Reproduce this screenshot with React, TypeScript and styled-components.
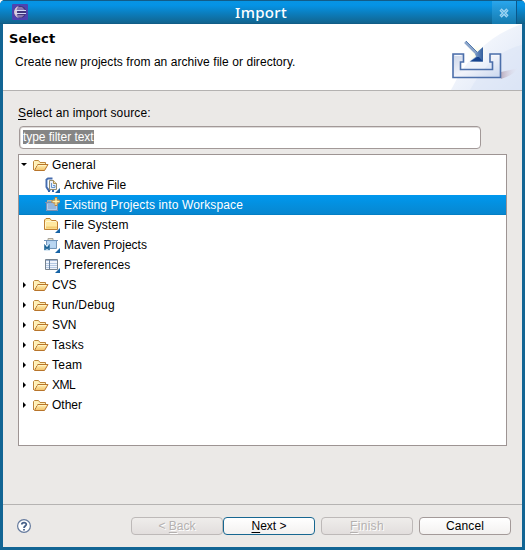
import React from "react";
import styled, { createGlobalStyle } from "styled-components";

const GlobalStyle = createGlobalStyle`
  * { box-sizing: border-box; }
  html, body { margin: 0; background: #fff; }
  body { font-family: "Liberation Sans", Arial, sans-serif; font-size: 12px; color: #000; }
  svg { display: block; flex: none; }
`;

const Dialog = styled.div`
  width: 525px;
  height: 550px;
  display: flex;
  flex-direction: column;
  background: #126594;
  border-radius: 5px 5px 0 0;
  padding: 0 3px 3px;
  overflow: hidden;
`;

const TitleBar = styled.header`
  height: 24px;
  flex: none;
  margin: 0 -3px;
  display: flex;
  align-items: stretch;
  border-top: 1px solid #125c88;
  background: linear-gradient(#0794e3, #0593e5 18%, #126590 95%, #105780);
`;

const AppIcon = styled.div`
  width: 40px;
  padding: 3px 0 0 12px;
`;

const Title = styled.h1<{ $spacing: number }>`
  flex: 1;
  margin: 0 0 0 -10px;
  text-align: center;
  font: 500 15px/23px "Noto Sans", "DejaVu Sans", sans-serif;
  letter-spacing: ${(p) => p.$spacing}px;
  color: #fff;
`;

const CloseButton = styled.button`
  width: 25px;
  margin-right: 8px;
  padding: 0;
  border: 0;
  border-right: 1px solid #0b578a;
  display: grid;
  place-items: center;
  background: linear-gradient(#29a6ed, #157aae);
`;

const Banner = styled.section`
  height: 67px;
  flex: none;
  display: flex;
  justify-content: space-between;
  background: #fff;
  border-bottom: 1px solid #b4b2b1;
`;

const BannerText = styled.div`
  padding: 6px 0 0 6px;
`;

const Heading = styled.h2`
  margin: 0;
  font: bold 13px/18px "DejaVu Sans", sans-serif;
  letter-spacing: 0.15px;
`;

const Text = styled.span<{ $spacing?: number }>`
  white-space: pre;
  letter-spacing: ${(p) => p.$spacing ?? 0}px;
  u { text-underline-offset: 2px; text-decoration-thickness: 1px; }
`;

const Description = styled.p`
  margin: 6px 0 0 6px;
  line-height: 16px;
`;

const Body = styled.main`
  flex: 1;
  padding: 14px 15px 0;
  background: #ebe9e7;
`;

const Label = styled.label`
  display: block;
  height: 21px;
  line-height: 16px;
`;

const FilterField = styled.div`
  width: 462px;
  height: 23px;
  margin: 0 0 5px 1px;
  padding: 3px 2px;
  border: 1px solid #a29998;
  border-radius: 4px;
  background: #fff;
  box-shadow: inset 0 1px #dedbda, inset 1px 0 #dedbda;
  line-height: 14px;
`;

const Selection = styled.span`
  display: inline-block;
  width: 71px;
  height: 14px;
  margin-left: 1px;
  background: #858585;
  color: #fff;
  vertical-align: top;
`;

const Tree = styled.div`
  height: 292px;
  background: #fff;
  border: 1px solid #9d9493;
`;

const Row = styled.div<{ $child?: boolean; $selected?: boolean }>`
  height: 20px;
  display: flex;
  align-items: center;
  padding-left: ${(p) => (p.$child ? 25 : 1)}px;
  line-height: 20px;
  color: ${(p) => (p.$selected ? "#fff" : "#000")};
  background: ${(p) => (p.$selected ? "linear-gradient(#0098ee, #0787d0 94%, #0079bc)" : "none")};
`;

const Expander = styled.span`
  width: 13px;
  height: 20px;
  display: flex;
  align-items: center;
`;

const RowLabel = styled(Text)<{ $child?: boolean }>`
  margin-left: ${(p) => (p.$child ? 4 : 3)}px;
`;

const Footer = styled.footer`
  height: 43px;
  flex: none;
  display: flex;
  align-items: flex-start;
  padding: 12px 10px 0 13px;
  border-top: 1px solid #b5b3b2;
  background: #ebe9e7;
`;

const HelpIcon = styled.div`
  width: 115px;
  padding: 2px 0 0 1px;
`;

const Button = styled.button<{ $kind?: "disabled" | "default"; $gap?: number }>`
  width: 92px;
  height: 18px;
  margin: 0 0 0 ${(p) => p.$gap ?? 0}px;
  padding: 0;
  border: 1px solid ${(p) => (p.$kind === "default" ? "#176791" : p.$kind === "disabled" ? "#bdb9b8" : "#a39a99")};
  border-radius: 4px;
  background: ${(p) => (p.$kind === "disabled" ? "linear-gradient(#efedeb, #e2dedd)" : "linear-gradient(#fff, #f3f1f0)")};
  color: ${(p) => (p.$kind === "disabled" ? "#b4b1b0" : "#000")};
  text-shadow: ${(p) => (p.$kind === "disabled" ? "1px 1px #fff" : "none")};
  font: 12px/16px "Liberation Sans", Arial, sans-serif;
`;

const EclipseIcon = () => (
  <svg width="16" height="16" viewBox="0 0 16 16">
    <rect width="16" height="16" rx="1" fill="#4e43b0" />
    <circle cx="8" cy="8" r="6.2" fill="#41367c" />
    <path d="M6.5 2C0.5 4 .5 12 6.5 14 4.5 10 4.5 6 6.5 2" fill="#d9c4d6" />
    <path d="M6 3h4l3 3H4.5zM4.5 11h8l-3 2.5H6z" fill="#8878b1" />
    <path d="M3 6.5h11M3 9.5h11" stroke="#d5d8f5" />
  </svg>
);

const CloseIcon = () => (
  <svg width="10" height="10" viewBox="0 0 10 10">
    <path d="M1.5 1.5l7 7M8.5 1.5l-7 7" stroke="#9bd2f1" strokeWidth="3.2" />
    <path d="M2 2l6 6M8 2L2 8" stroke="#5cb3e4" strokeWidth="1" />
  </svg>
);

const ImportArt = () => (
  <svg width="74" height="66" viewBox="0 0 74 66">
    <defs>
      <linearGradient id="sky" x1="0" y1="0" x2="1" y2="1">
        <stop offset="0" stopColor="#fff" /><stop offset="1" stopColor="#dce5f6" />
      </linearGradient>
      <linearGradient id="tray" x1="0" y1="0" x2="1" y2="1">
        <stop offset="0" stopColor="#cbd5e8" /><stop offset=".5" stopColor="#f1f3fa" /><stop offset="1" stopColor="#c9d7ee" />
      </linearGradient>
      <linearGradient id="arrow" x1="0" y1="0" x2="1" y2="0">
        <stop offset="0" stopColor="#b1cae4" /><stop offset="1" stopColor="#315d9d" />
      </linearGradient>
      <radialGradient id="glow"><stop offset="0" stopColor="#ffffdc" /><stop offset="1" stopColor="#fff" stopOpacity="0" /></radialGradient>
      <linearGradient id="shade"><stop stopColor="#bcaebe" /><stop offset="1" stopColor="#e8e7f4" stopOpacity="0" /></linearGradient>
    </defs>
    <path d="M74 0Q27 16 3 66H74z" fill="url(#sky)" />
    <path d="M74 21Q43 28 22 66H74z" fill="#d9e3f5" opacity=".5" />
    <path d="M53 48L71 44Q64 52 53 55z" fill="url(#shade)" />
    <circle cx="29" cy="30" r="12" fill="url(#glow)" />
    <path d="M5 30H15.5V38H12.5V45.5H44.5V38H42V30H52.5V53.5H5Z" fill="url(#tray)" stroke="#4c6faa" strokeWidth="1.6" />
    <path d="M6.5 31.5H13.5M43.5 31.5H51" stroke="#f6f9fe" />
    <path d="M17 18L29 30" stroke="#8ca5ca" strokeWidth="2.5" />
    <path d="M18 17L30 29" stroke="#527aae" />
    <path d="M35 23V37.5H21.5L28 32.5 27 30z" fill="url(#arrow)" />
    <path d="M29 33H31L35 37.5H22z" fill="#18458f" />
  </svg>
);

const OpenFolder = () => (
  <svg width="16" height="13" viewBox="0 0 16 13">
    <defs><linearGradient id="folder" x1="0" y1="0" x2="0" y2="1"><stop stopColor="#fff1b6" /><stop offset="1" stopColor="#f4c269" /></linearGradient></defs>
    <path d="M.5 11V2.5L1.5 1.5H5.5L7 3.5H12.5V6" fill="#fff0b6" stroke="#bd853b" />
    <path d="M4.5 5.5H15L11.5 11.5H1.5z" fill="url(#folder)" stroke="#b8752b" />
    <path d="M1.5 3V9L4 5.5M5 6.5h8" fill="none" stroke="#fff5c5" />
  </svg>
);

const Corner = () => <path d="M16 11V16H11z" fill="#1763a5" />;

const ArchiveIcon = () => (
  <svg width="16" height="16" viewBox="0 0 16 16">
    <path d="M2.5 2.5L4 1.5H8.5M2.5 2V10L4 12.5H7" fill="none" stroke="#466cae" strokeWidth="2" />
    <path d="M3.5 3V10" stroke="#a8c4e8" />
    <path d="M5.5 3.5H9.5L12.5 6.5V12.5H5.5z" fill="#e8f0fa" stroke="#928c70" />
    <path d="M9.5 3.5V6.5H12.5" fill="#f6dfaa" stroke="#aa9055" />
    <path d="M7.5 6V10.5H11V8.5H9" fill="none" stroke="#6796cd" />
    <path d="M4 14h2M8 14h2" stroke="#3465a9" strokeWidth="2" /><Corner />
  </svg>
);

const ProjectIcon = () => (
  <svg width="16" height="16" viewBox="0 0 16 16">
    <path d="M3.5 5V3.5H8V5" fill="#6caed9" stroke="#c0b496" />
    <path d="M2 5.5H14V14H2z" fill="#93b5dc" />
    <path d="M1 5.5H14M2.5 6V13.5H13.5V6" fill="none" stroke="#7d8fae" />
    <path d="M3.5 7V12.5H12.5V7" fill="none" stroke="#b0cdea" />
    <path d="M12 0V9M7.5 4.5H16.5" stroke="#c68734" strokeWidth="2.6" />
    <path d="M9.5 2L14.5 7M14.5 2L9.5 7" stroke="#d59b48" />
    <path d="M12 1V8M8.5 4.5H15.5" stroke="#fff4b1" strokeWidth="1.3" />
  </svg>
);

const ClosedFolder = () => (
  <svg width="16" height="16" viewBox="0 0 16 16">
    <path d="M.5 12.5V3L2 1.5H6L7.5 3.5H12L13.5 5V12.5z" fill="#ffe8a0" stroke="#bf8032" />
    <path d="M2 4.5H12M1.5 5V11" stroke="#fff7cf" />
    <path d="M2 10.5H13" stroke="#f4cb71" strokeWidth="2" /><Corner />
  </svg>
);

const MavenIcon = () => (
  <svg width="16" height="16" viewBox="0 0 16 16">
    <path d="M4 3V1.5H9V3" fill="#eae4cd" stroke="#aaa49a" />
    <path d="M0 3.5H14M2.5 4V11.5H12.5V4" fill="#b4d2f0" stroke="#7295b9" />
    <path d="M3.5 5.5H11.5V10H4z" fill="#b9d6f2" />
    <path d="M0 8h6v6H0z" fill="#d9e9f5" />
    <path d="M1 13V9L3 11.5L5 9V13" fill="none" stroke="#1d6395" strokeWidth="1.5" /><Corner />
  </svg>
);

const PreferencesIcon = () => (
  <svg width="16" height="16" viewBox="0 0 16 16">
    <path d="M1.5 2.5H13.5V12.5H1.5z" fill="#eff4fc" stroke="#77838f" />
    <path d="M2 3.5H13" stroke="#9eb2d0" strokeWidth="1" />
    <path d="M2 6.5H13M2 8.5H13M2 10.5H13" stroke="#b4c8e2" />
    <path d="M5.5 3V12" stroke="#67809e" /><Corner />
  </svg>
);

const HelpGlyph = () => (
  <svg width="15" height="15" viewBox="0 0 15 15">
    <circle cx="7" cy="7" r="6.4" fill="#fff" stroke="#657a9d" strokeWidth="1.2" />
    <path d="M4.8 5.5C4.8 3 9.5 3 9.3 5.5C9.2 7 7 7 7 9M7 10V11.5" fill="none" stroke="#476089" strokeWidth="1.8" />
  </svg>
);

const sources = [
  { name: "Archive File", icon: <ArchiveIcon />, spacing: -0.05 },
  { name: "Existing Projects into Workspace", icon: <ProjectIcon />, spacing: 0.14, selected: true },
  { name: "File System", icon: <ClosedFolder />, spacing: 0.17 },
  { name: "Maven Projects", icon: <MavenIcon />, spacing: 0.02 },
  { name: "Preferences", icon: <PreferencesIcon />, spacing: 0.16 },
];

const categories = [
  { name: "CVS", spacing: -0.1 },
  { name: "Run/Debug", spacing: 0.23 },
  { name: "SVN", spacing: -0.1 },
  { name: "Tasks", spacing: 0.3 },
  { name: "Team", spacing: 0.25 },
  { name: "XML", spacing: -0.5 },
  { name: "Other", spacing: 0 },
];

const Category = ({ name, spacing = 0.15, open }: { name: string; spacing?: number; open?: boolean }) => (
  <Row>
    <Expander>
      <svg width="8" height="8" viewBox="0 0 8 8"><path d={open ? "M1 2H7L4 5z" : "M3 1L6 4L3 7z"} /></svg>
    </Expander>
    <OpenFolder />
    <RowLabel $spacing={spacing}>{name}</RowLabel>
  </Row>
);

export default function App() {
  return (
    <>
      <GlobalStyle />
      <Dialog>
        <TitleBar>
          <AppIcon><EclipseIcon /></AppIcon>
          <Title $spacing={0.3}>Import</Title>
          <CloseButton aria-label="Close"><CloseIcon /></CloseButton>
        </TitleBar>
        <Banner>
          <BannerText>
            <Heading>Select</Heading>
            <Description><Text $spacing={0.06}>Create new projects from an archive file or directory.</Text></Description>
          </BannerText>
          <ImportArt />
        </Banner>
        <Body>
          <Label><Text $spacing={0.14}><u>S</u>elect an import source:</Text></Label>
          <FilterField><Selection><Text $spacing={-0.05}>type filter text</Text></Selection></FilterField>
          <Tree>
            <Category name="General" open />
            {sources.map((s) => (
              <Row key={s.name} $child $selected={s.selected}>
                {s.icon}
                <RowLabel $child $spacing={s.spacing}>{s.name}</RowLabel>
              </Row>
            ))}
            {categories.map((c) => <Category key={c.name} name={c.name} spacing={c.spacing} />)}
          </Tree>
        </Body>
        <Footer>
          <HelpIcon><HelpGlyph /></HelpIcon>
          <Button $kind="disabled"><Text $spacing={0}>&lt; <u>B</u>ack</Text></Button>
          <Button $kind="default"><Text $spacing={0}><u>N</u>ext &gt;</Text></Button>
          <Button $kind="disabled" $gap={6}><Text $spacing={0.3}><u>F</u>inish</Text></Button>
          <Button $gap={6}><Text $spacing={0.1}>Cancel</Text></Button>
        </Footer>
      </Dialog>
    </>
  );
}
